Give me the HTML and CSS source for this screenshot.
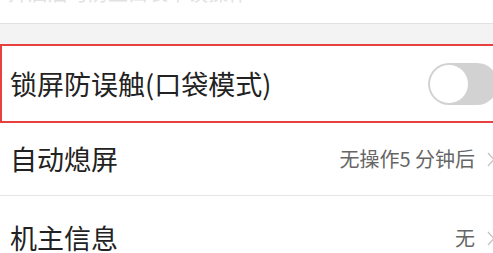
FILE: index.html
```html
<!DOCTYPE html>
<html lang="zh-CN">
<head>
<meta charset="utf-8">
<title>设置</title>
<link rel="stylesheet" href="styles.css">
</head>
<body>
<div class="page">
  <div class="top"><span class="top-text">开启后可防止口袋中误操作</span></div>
  <div class="band"></div>
  <div class="row row-highlight">
    <span class="label">锁屏防误触(口袋模式)</span>
    <span class="switch"><span class="knob"></span></span>
  </div>
  <div class="row row-auto">
    <span class="label">自动熄屏</span>
    <span class="value">无操作5 分钟后
      <svg class="chev" width="8" height="15" viewBox="0 0 8 15"><polyline points="1,1 7,7.5 1,14" fill="none" stroke="#c4c4c4" stroke-width="1.4"/></svg>
    </span>
  </div>
  <div class="row row-owner">
    <span class="label">机主信息</span>
    <span class="value">无
      <svg class="chev" width="8" height="15" viewBox="0 0 8 15"><polyline points="1,1 7,7.5 1,14" fill="none" stroke="#c4c4c4" stroke-width="1.4"/></svg>
    </span>
  </div>
</div>
</body>
</html>
```
FILE: styles.css
```css
html, body {
  margin: 0;
  padding: 0;
  background: #ffffff;
  overflow: hidden;
}
.page {
  width: 505px;
  font-family: "Noto Sans CJK SC", "Noto Sans", sans-serif;
  color: #222222;
}
.top {
  height: 23px;
  overflow: hidden;
  border-bottom: 1px solid #e2e2e2;
  padding-left: 8px;
}
.top-text {
  display: block;
  font-size: 20px;
  line-height: 20px;
  margin-top: -17px;
  color: #e2e2e2;
}
.band {
  height: 20px;
  background: #f3f3f3;
}
.row {
  display: flex;
  align-items: center;
  justify-content: space-between;
  padding: 0 10px 0 10px;
  background: #ffffff;
}
.label {
  font-size: 27px;
  line-height: 32px;
  color: #222222;
}
.row-highlight {
  height: 75px;
  border: 2px solid #e8403f;
  padding: 0 5px 0 8px;
}
.row-auto {
  height: 72px;
  border-bottom: 1px solid #e6e6e6;
}
.row-owner {
  height: 84px;
}
.value {
  display: flex;
  align-items: center;
  gap: 12px;
  font-size: 20px;
  line-height: 24px;
  color: #666666;
}
.chev {
  display: block;
}
.switch {
  position: relative;
  width: 70px;
  height: 42px;
  border-radius: 21px;
  background: #d2d2d2;
}
.knob {
  position: absolute;
  left: 2px;
  top: 2px;
  width: 38px;
  height: 38px;
  border-radius: 50%;
  background: #ffffff;
}
```
